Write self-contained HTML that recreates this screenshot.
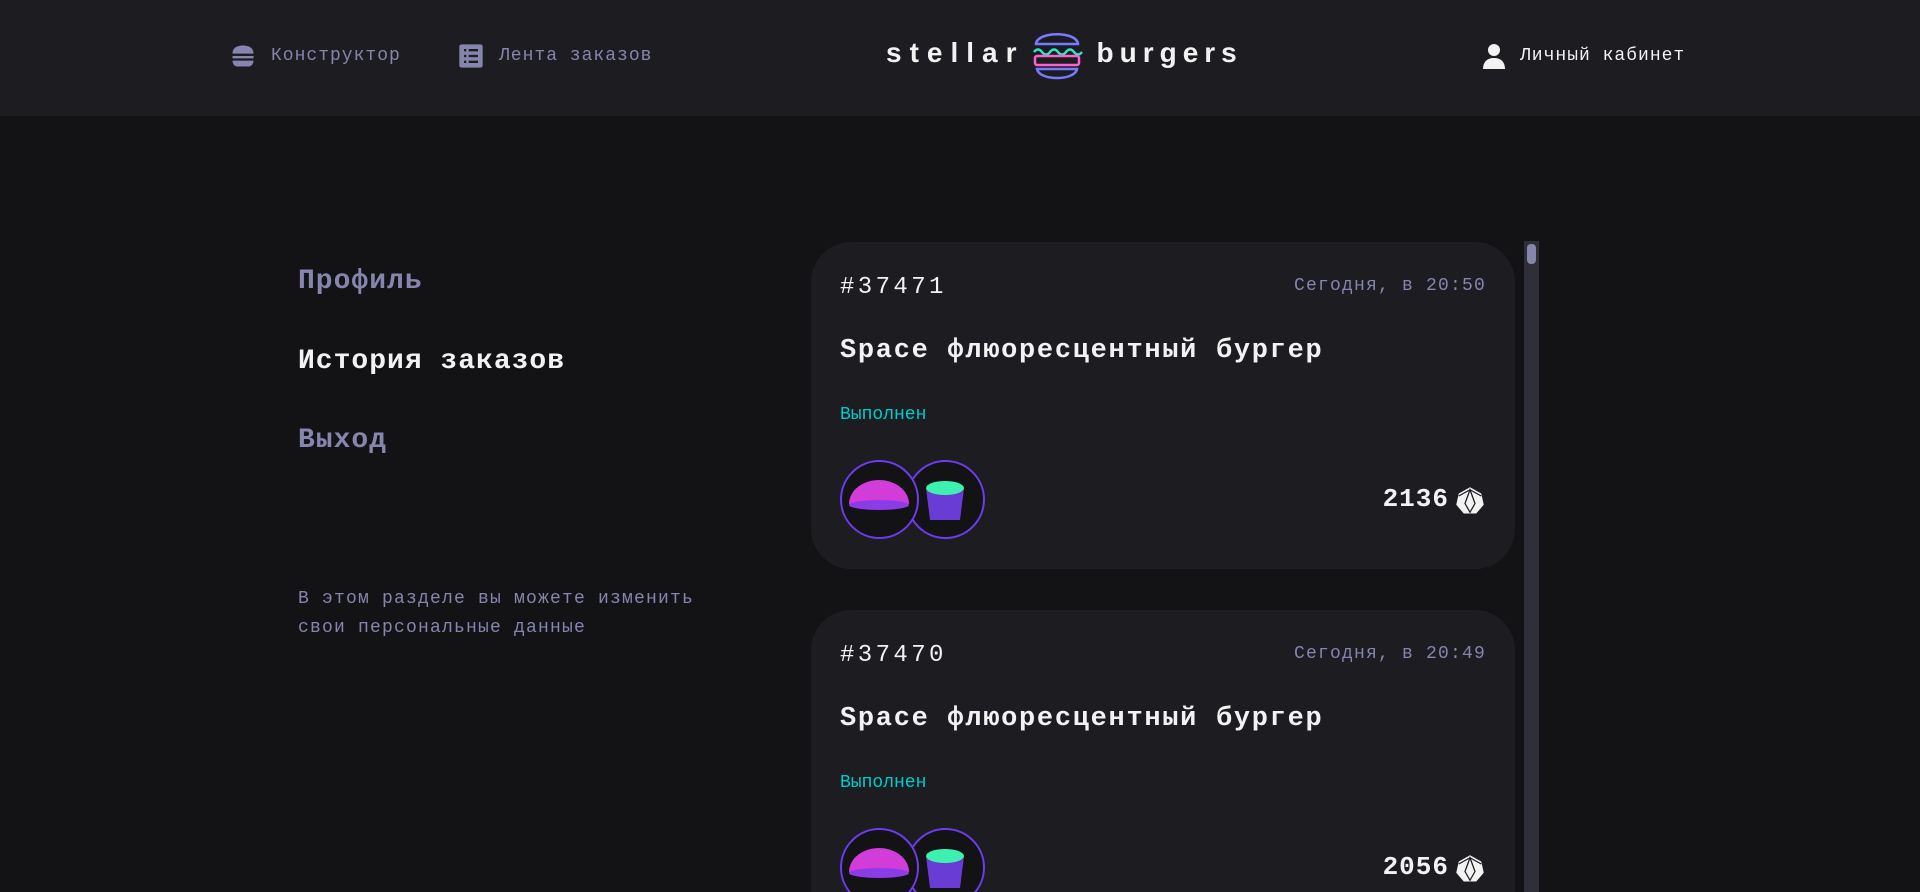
<!DOCTYPE html>
<html><head><meta charset="utf-8"><style>
*{margin:0;padding:0;box-sizing:border-box}
html,body{width:1920px;height:892px;overflow:hidden}
body{background:#131316;font-family:"Liberation Mono",monospace;color:#f2f2f3;position:relative}
#wrap{position:absolute;left:0;top:0;width:1920px;height:892px;overflow:hidden}
header{position:absolute;left:0;top:0;width:1920px;height:116px;background:#1c1c21}
.nav{position:absolute;top:44px;font-size:18px;letter-spacing:1px;color:#8585ad;display:flex;align-items:center;height:24px}
.nav svg{margin-right:14px}
.logo{position:absolute;left:886px;top:25px;height:56px;display:flex;align-items:center}
.logo span{font-family:"Liberation Sans",sans-serif;font-size:28px;color:#f2f2f3;font-weight:bold}
.menu{position:absolute;left:298px;font-size:28px;letter-spacing:1px;font-weight:bold;color:#8585ad}
.cap{position:absolute;left:298px;top:585px;font-size:18px;letter-spacing:1.2px;line-height:29px;color:#8585ad}
.card{position:absolute;left:811px;width:704px;height:327px;background:#1c1c21;border-radius:40px;overflow:hidden}
.num{position:absolute;left:29px;top:32px;font-size:24px;letter-spacing:3.4px}
.date{position:absolute;right:29px;top:34px;font-size:18px;letter-spacing:1.2px;color:#8585ad}
.title{position:absolute;left:29px;top:94px;font-size:27px;letter-spacing:1.7px;font-weight:bold}
.st{position:absolute;left:29px;top:163px;font-size:18px;color:#00cccc}
.ic{position:absolute;top:218px;width:79px;height:79px;border-radius:50%;border:2px solid #6e3cf0;background:#131316;overflow:hidden}
.price{position:absolute;right:66px;top:242px;font-size:26px;font-weight:bold;letter-spacing:1px}
.cur{position:absolute;right:30px;top:244px}
</style></head><body><div id="wrap">
<header>
<div class="nav" style="left:229px"><svg width="28" height="28" viewBox="0 0 24 24"><path d="M3 10 C3 5 7 3 12 3 S21 5 21 10Z M3 12h18v2H3z M3 16h18c0 3-2 5-4 5H7c-2 0-4-2-4-5z" fill="#8585ad"/></svg>Конструктор</div>
<div class="nav" style="left:457px"><svg width="28" height="28" viewBox="0 0 24 24"><rect x="2" y="2" width="20" height="20" rx="2" fill="#8585ad"/><g fill="#1c1c21"><rect x="6" y="6" width="2" height="2"/><rect x="10" y="6" width="8" height="2"/><rect x="6" y="11" width="2" height="2"/><rect x="10" y="11" width="8" height="2"/><rect x="6" y="16" width="2" height="2"/><rect x="10" y="16" width="8" height="2"/></g></svg>Лента заказов</div>
<div class="logo"><span style="letter-spacing:8px">stellar</span>
<svg width="60" height="60" viewBox="0 0 60 56" style="margin:0 10px 0 2px"><path d="M9 19 C10 6 50 6 51 19Z" fill="none" stroke="#7a7aff" stroke-width="2.5"/><path d="M7 27 q4-5 8 0 t8 0 t8 0 t8 0 t8 0 t8 0" fill="none" stroke="#2ee6c6" stroke-width="2.5"/><rect x="8" y="31" width="44" height="9" rx="2" fill="none" stroke="#ff5fcf" stroke-width="2.5"/><path d="M10 44 C12 56 48 56 50 44Z" fill="none" stroke="#7a7aff" stroke-width="2.5"/></svg>
<span style="letter-spacing:6px">burgers</span></div>
<div class="nav" style="left:1482px;color:#f2f2f3"><svg width="24" height="28" viewBox="0 0 24 28"><circle cx="12" cy="8" r="6" fill="#f2f2f3"/><path d="M1 27c0-7 4-11 11-11s11 4 11 11z" fill="#f2f2f3"/></svg>Личный кабинет</div>
</header>
<div class="menu" style="top:266px">Профиль</div>
<div class="menu" style="top:346px;color:#f2f2f3">История заказов</div>
<div class="menu" style="top:425px">Выход</div>
<div class="cap">В этом разделе вы можете изменить<br>свои персональные данные</div>

<div class="card" style="top:242px">
<div class="num">#37471</div><div class="date">Сегодня, в 20:50</div>
<div class="title">Space флюоресцентный бургер</div><div class="st">Выполнен</div>
<div class="ic" style="left:29px;z-index:2"><svg width="75" height="75"><ellipse cx="37" cy="42" rx="30" ry="24" fill="#d23cd8"/><rect x="0" y="42" width="75" height="40" fill="#131316"/><ellipse cx="37" cy="43" rx="30" ry="5" fill="#8a3ce6"/></svg></div>
<div class="ic" style="left:95px;z-index:1"><svg width="75" height="75"><path d="M18 26 L22 58 H52 L56 26Z" fill="#6a3cd6"/><ellipse cx="37" cy="26" rx="19" ry="7" fill="#3cf0b0"/></svg></div>
<div class="price">2136</div>
<svg class="cur" width="30" height="30" viewBox="0 0 24 24"><path d="M12 1 L21 6 L23 15 L17 22 H7 L1 15 L3 6Z" fill="#f2f2f3"/><path d="M12 3 L8 14 L12 21 L16 14Z M12 3 L3 8 M12 3 L21 8" fill="none" stroke="#1c1c21" stroke-width="1"/></svg>
</div>

<div class="card" style="top:610px;height:282px;border-radius:40px 40px 0 0">
<div class="num">#37470</div><div class="date">Сегодня, в 20:49</div>
<div class="title">Space флюоресцентный бургер</div><div class="st">Выполнен</div>
<div class="ic" style="left:29px;z-index:2"><svg width="75" height="75"><ellipse cx="37" cy="42" rx="30" ry="24" fill="#d23cd8"/><rect x="0" y="42" width="75" height="40" fill="#131316"/><ellipse cx="37" cy="43" rx="30" ry="5" fill="#8a3ce6"/></svg></div>
<div class="ic" style="left:95px;z-index:1"><svg width="75" height="75"><path d="M18 26 L22 58 H52 L56 26Z" fill="#6a3cd6"/><ellipse cx="37" cy="26" rx="19" ry="7" fill="#3cf0b0"/></svg></div>
<div class="price">2056</div>
<svg class="cur" width="30" height="30" viewBox="0 0 24 24"><path d="M12 1 L21 6 L23 15 L17 22 H7 L1 15 L3 6Z" fill="#f2f2f3"/><path d="M12 3 L8 14 L12 21 L16 14Z M12 3 L3 8 M12 3 L21 8" fill="none" stroke="#1c1c21" stroke-width="1"/></svg>
</div>

<div style="position:absolute;left:1524px;top:241px;width:15px;height:651px;background:#2f2f37"></div>
<div style="position:absolute;left:1527px;top:244px;width:9px;height:20px;border-radius:4px;background:#8585ad"></div>
</div></body></html>
